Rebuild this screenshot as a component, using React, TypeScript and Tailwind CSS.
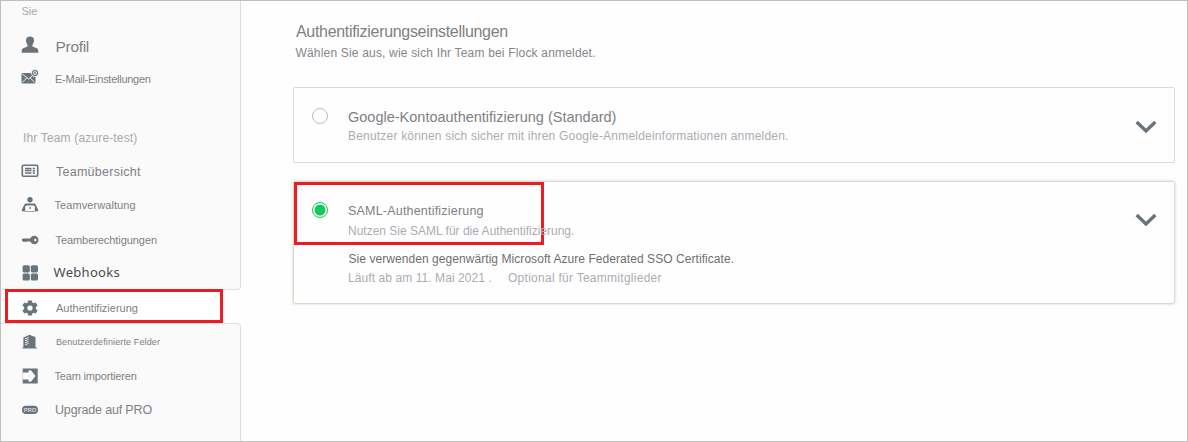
import React from "react";

const row = "flex items-center pl-[20px]";
const label = "whitespace-nowrap leading-4";

function Chevron() {
  return (
    <svg width="22" height="14" viewBox="0 0 22 14" fill="none">
      <path d="M1.700 2 11 11 20.300 2" stroke="#69737c" strokeWidth="3.400" />
    </svg>
  );
}

function Icon({ children, className = "" }: { children: React.ReactNode; className?: string }) {
  return (
    <svg className={`shrink-0 ${className}`} width="18" height="18" viewBox="0 0 18 18" fill="#69737c">
      {children}
    </svg>
  );
}

export default function App() {
  return (
    <div className="flex h-[442px] w-[1188px] overflow-hidden border border-[#bfbfbf] bg-[#fefefe] font-['Liberation_Sans',sans-serif] text-[11px] text-[#808084]">
      <nav className="flex w-[240px] shrink-0 flex-col">
        <div className="h-[289px] rounded-br-sm border-r border-b border-[#dedede] bg-[#fafafa]">
          <div className="flex h-[29px] items-start pl-[20.500px] pt-[2px] text-[#a9a9ab]">
            <span className={label}>Sie</span>
          </div>
          <div className={`${row} h-8 text-[15.500px]`}>
            <Icon className="mb-[3px]"><path d="M5 4.300C5 1.800 6.500.6 9 .6s4 1.200 4 3.700c0 1.800-.6 3.300-1.500 4.300v1.800l4.300 1.900c1.200.6 1.500 1.500 1.500 4.500H.7c0-3 .3-3.900 1.500-4.500l4.300-1.900V8.600C5.600 7.600 5 6.100 5 4.300Z" /></Icon>
            <span className={`${label} ml-[16.500px] mt-px tracking-[-0.300px]`}>Profil</span>
          </div>
          <div className={`${row} h-[34px]`}>
            <Icon className="mb-[2px]">
              <rect x=".5" y="4" width="14" height="10.500" rx="1" />
              <path d="m1.300 5 6.200 5 6.200-5M1.300 13.500l4.500-4.700M13.700 13.500 9.200 8.800" stroke="#fafafa" strokeWidth=".9" fill="none" />
              <circle cx="14" cy="4" r="3.600" stroke="#fafafa" strokeWidth=".8" />
              <circle cx="14" cy="4" r="1.500" fill="none" stroke="#fafafa" strokeWidth=".9" />
            </Icon>
            <span className={`${label} ml-4 tracking-[-0.260px]`}>E-Mail-Einstellungen</span>
          </div>
          <div className="flex h-[58px] items-end pb-[8px] pl-[22px] text-[12px] text-[#a9a9ab]">
            <span className={`${label} tracking-[0.160px]`}>Ihr Team (azure-test)</span>
          </div>
          <div className={`${row} h-[34px] text-[12.500px]`}>
            <Icon>
              <rect x="1.300" y="3.300" width="15.400" height="11" rx="1.200" fill="none" stroke="#69737c" strokeWidth="1.600" />
              <path d="M4 5.700h6.500v3.600H4zM11.700 5.700h2.300v1.600h-2.300zM11.700 8h2.300v1.500h-2.300zM4 10.300h6.500v1.400H4zM11.700 10.300h2.300v1.400h-2.300z" />
              <path d="M4 7.500h6.500" stroke="#fafafa" strokeWidth=".5" />
            </Icon>
            <span className={`${label} ml-[17px] mt-[2px] tracking-[0.260px]`}>Teamübersicht</span>
          </div>
          <div className={`${row} h-[34px]`}>
            <Icon>
              <circle cx="9" cy="3.700" r="2.700" />
              <path d="M5 7.400h8c1 0 1.400.6 1.700 1.400L17.200 14v1.300h-3.400V10H4.200v5.300H.8V14l2.500-5.200c.3-.8.700-1.400 1.700-1.400Z" />
              <path d="M5 9.500h8v5.200H5z" fill="#fafafa" />
              <circle cx="9" cy="12" r=".9" />
              <path d="M4 15h10v.9H4z" opacity=".7" />
            </Icon>
            <span className={`${label} ml-[15.500px] tracking-[0.080px]`}>Teamverwaltung</span>
          </div>
          <div className={`${row} h-[35px]`}>
            <Icon>
              <path d="M.6 8.800 1.800 7.500H11v3H5.500l-.8.700-.9-.7-.9.600-.9-.6h-.4Z" />
              <circle cx="13.300" cy="9" r="4.200" />
              <circle cx="14.300" cy="9" r="1.300" fill="#fafafa" />
            </Icon>
            <span className={`${label} ml-[16.500px] tracking-[-0.070px]`}>Teamberechtigungen</span>
          </div>
          <div className={`${row} h-8 font-['Noto_Sans',sans-serif] text-[13px] text-[#4a4b50]`}>
            <Icon>
              <rect x="1.600" y="1.200" width="7.200" height="7.200" rx="1.500" />
              <rect x="9.800" y="1.200" width="7.200" height="7.200" rx="1.500" />
              <rect x="1.600" y="9.400" width="7.200" height="7.200" rx="1.500" />
              <rect x="9.800" y="9.400" width="7.200" height="7.200" rx="1.500" />
            </Icon>
            <span className={`${label} mb-[3px] ml-[14.500px] tracking-[0.300px]`}>Webhooks</span>
          </div>
        </div>
        <div className="flex h-[33px] pl-1">
          <div className="-mt-px flex h-[34px] w-[218px] items-center border-[3px] border-[#ed1c24] bg-white pl-[13px]">
            <Icon className="mt-[3px]">
              <path fillRule="evenodd" d="M7.100 1.500h3.800l.4 2.100 1.300.7 2.100-.8 1.900 3.100-1.700 1.500v1.800l1.700 1.500-1.900 3.100-2.100-.8-1.300.7-.4 2.100H7.100l-.4-2.100-1.300-.7-2.100.8-1.900-3.100 1.700-1.500V8.100L1.400 6.600l1.900-3.100 2.100.8 1.300-.7ZM9 6.400a2.600 2.600 0 1 0 0 5.200 2.600 2.600 0 0 0 0-5.200Z" />
            </Icon>
            <span className={`${label} ml-[17px] mt-[3px]`}>Authentifizierung</span>
          </div>
        </div>
        <div className="flex-1 rounded-tr-sm border-t border-r border-[#dedede] bg-[#fafafa]">
          <div className={`${row} h-[34px] text-[9px]`}>
            <Icon className="mt-[2px]">
              <path d="M1.500 14.500h.9V4.500L8 2v12.500h.8V2.200L14.500 4v10.500h1.500v1H1.500Z" />
              <path d="M8 2h2v12.500H8z" />
              <path d="m4 5.800 3.500-1.300M4 7.800l3.500-1.300M4 9.800l3.500-1.300M4 11.800l3.500-1.300" stroke="#fafafa" strokeWidth=".9" />
            </Icon>
            <span className={`${label} ml-[17px] mt-[2px] tracking-[0.120px]`}>Benutzerdefinierte Felder</span>
          </div>
          <div className={`${row} h-[34px]`}>
            <Icon className="mt-px">
              <path d="M1.700 1.500h15v15h-15z" />
              <path d="M1.700 5.500h5.800V3.500L10 3.300 14.500 9 10 14.700l-2.500-.2v-2H1.700v-2.300h6.600V7.800H1.700z" fill="#fafafa" />
              <path d="M1.700 7h7v4h-7z" fill="#fafafa" />
            </Icon>
            <span className={`${label} ml-[15.500px] mt-[2px] tracking-[-0.180px]`}>Team importieren</span>
          </div>
          <div className={`${row} h-[34px] text-[12.500px]`}>
            <Icon className="mt-[2px]">
              <rect x="1" y="4.800" width="16" height="8.200" rx="4" />
              <text x="9" y="11" textAnchor="middle" fontSize="5.800" fontWeight="700" fill="#d4d7da">PRO</text>
            </Icon>
            <span className={`${label} ml-4 mt-[2px] tracking-[-0.160px]`}>Upgrade auf PRO</span>
          </div>
        </div>
      </nav>

      <main className="flex-1 pl-[52px] pr-3 pt-[23px] text-[12px]">
        <h1 className="pl-[3px] text-[16px] leading-4 tracking-[-0.310px]">Authentifizierungseinstellungen</h1>
        <p className="mt-[5px] pl-[2.500px] leading-4 tracking-[0.180px] text-[#85858c]">Wählen Sie aus, wie sich Ihr Team bei Flock anmeldet.</p>

        <section className="mt-[26px] flex h-[76px] rounded-[2px] border border-[#dcdccc] pl-[18px] pr-[17px]">
          <i className="mt-5 size-4 shrink-0 rounded-full border border-[#bdbdbd]" />
          <div className="ml-5 flex-1 pt-[19px]">
            <h2 className="text-[14.500px] leading-5">Google-Kontoauthentifizierung (Standard)</h2>
            <p className="mt-px leading-4 tracking-[0.200px] text-[#acacb2]">Benutzer können sich sicher mit ihren Google-Anmeldeinformationen anmelden.</p>
          </div>
          <div className="pt-8"><Chevron /></div>
        </section>

        <section className="relative mt-[18px] flex h-[123px] rounded-[2px] border border-[#dcdccc] pl-[18px] pr-[17px] shadow-[0_0_3px_#d0d0d0]">
          <div className="absolute left-0 top-0 h-[63px] w-[250px] border-[3px] border-[#ed1c24]" />
          <i className="mt-5 flex size-4 shrink-0 items-center justify-center rounded-full border border-[#12c859]">
            <svg width="12" height="12" viewBox="0 0 12 12"><circle cx="6" cy="6" r="5.500" fill="#12c859" /></svg>
          </i>
          <div className="relative ml-5 flex-1 pt-[19px]">
            <h2 className="text-[12.500px] leading-5 tracking-[0.200px]">SAML-Authentifizierung</h2>
            <p className="leading-5 text-[#acacb2]">Nutzen Sie SAML für die Authentifizierung.</p>
            <p className="mt-2 pl-[0.500px] leading-5 tracking-[0.060px] text-[#6f6f72]">Sie verwenden gegenwärtig Microsoft Azure Federated SSO Certificate.</p>
            <p className="mt-px flex leading-4 text-[#acacb2]">
              <span className="w-[160px] tracking-[0.080px]">Läuft ab am 11. Mai 2021 .</span>
              <span className="tracking-[0.270px]">Optional für Teammitglieder</span>
            </p>
          </div>
          <div className="pt-[31px]"><Chevron /></div>
        </section>
      </main>
    </div>
  );
}
